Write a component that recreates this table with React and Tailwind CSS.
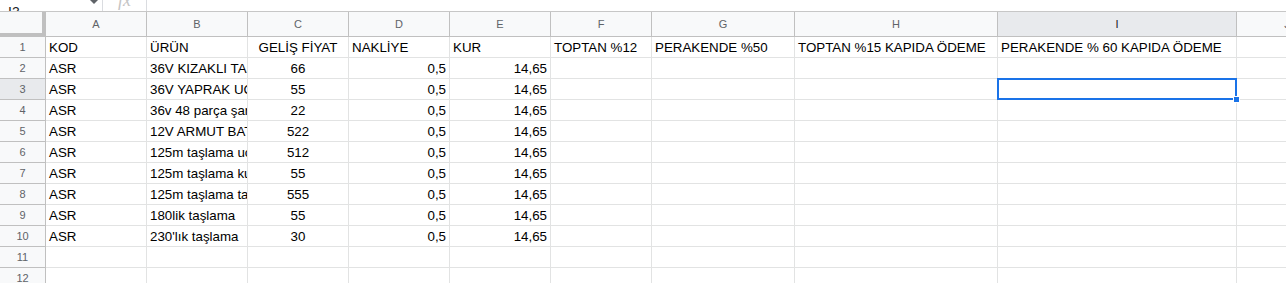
import React from 'react'

const cols = [
  { key: 'A', w: 'w-[101px]' },
  { key: 'B', w: 'w-[101px]' },
  { key: 'C', w: 'w-[101px]' },
  { key: 'D', w: 'w-[101px]' },
  { key: 'E', w: 'w-[101px]' },
  { key: 'F', w: 'w-[101px]' },
  { key: 'G', w: 'w-[143px]' },
  { key: 'H', w: 'w-[203px]' },
  { key: 'I', w: 'w-[239px]' },
  { key: 'J', w: 'w-[101px]' },
]

const align = { C: 'justify-center', D: 'justify-end', E: 'justify-end' }

const header = ['KOD', 'ÜRÜN', 'GELİŞ FİYAT', 'NAKLİYE', 'KUR', 'TOPTAN %12', 'PERAKENDE %50', 'TOPTAN %15 KAPIDA ÖDEME', 'PERAKENDE % 60 KAPIDA ÖDEME', '']

const products = [
  ['36V KIZAKLI TAŞLAMA', '66'],
  ['36V YAPRAK UÇ SETİ', '55'],
  ['36v 48 parça şarjlı set', '22'],
  ['12V ARMUT BATARYA', '522'],
  ['125m taşlama ucu', '512'],
  ['125m taşlama kulbu', '55'],
  ['125m taşlama taşı', '555'],
  ['180lik taşlama', '55'],
  ["230'lık taşlama", '30'],
]

const rows = [
  header,
  ...products.map(([name, price]) => ['ASR', name, price, '0,5', '14,65', '', '', '', '', '']),
  Array(10).fill(''),
  Array(10).fill(''),
]

export default function App() {
  return (
    <div className="w-[1286px] h-[283px] overflow-hidden bg-white text-black" style={{ fontFamily: '"Liberation Sans", Arial, sans-serif' }}>
      {/* formula bar, cut off at the top */}
      <div className="h-[12px] overflow-hidden flex border-b border-[#c7c7c7]">
        <div className="w-[103px] flex items-end border-r border-[#dadce0] relative">
          <span className="ml-[8px] -mb-[8px] text-[14px] text-[#202124] leading-none">I3</span>
          <span className="absolute left-[90px] top-0 w-0 h-0 border-l-[4px] border-r-[4px] border-t-[4px] border-l-transparent border-r-transparent border-t-[#5f6368]" />
        </div>
        <div className="w-[44px] border-r border-[#dadce0] flex items-start justify-center">
          <span className="-mt-[9px] text-[18px] italic text-[#c4c4c4] leading-none" style={{ fontFamily: '"Liberation Serif", serif' }}>fx</span>
        </div>
        <div className="flex-1" />
      </div>

      {/* column headers */}
      <div className="flex h-[25px] bg-[#f8f9fa]">
        <div className="w-[46px] shrink-0 border-r-[4px] border-b-[4px] border-[#c0c0c0]" />
        {cols.map((c) => (
          <div
            key={c.key}
            className={`${c.w} shrink-0 flex items-center justify-center pt-[1px] border-r border-b border-[#c0c0c0] text-[11px] ${c.key === 'I' ? 'bg-[#e8eaed] text-[#202124]' : 'text-[#5f6368]'}`}
          >
            {c.key}
          </div>
        ))}
      </div>

      {/* rows */}
      <div className="relative">
        {rows.map((r, i) => (
          <div key={i} className="flex h-[21px]">
            <div className={`w-[46px] shrink-0 flex items-center justify-center pt-[1px] border-r border-b border-[#c0c0c0] text-[11px] text-[#5f6368] ${i === 2 ? 'bg-[#e8eaed]' : 'bg-[#f8f9fa]'}`}>
              {i + 1}
            </div>
            {cols.map((c, j) => (
              <div
                key={c.key}
                className={`${c.w} shrink-0 flex items-center overflow-hidden whitespace-nowrap px-[3px] pt-[1px] border-r border-b border-[#e2e3e3] text-[13.33px] ${i === 0 ? (c.key === 'C' ? 'justify-center' : 'justify-start') : align[c.key] || 'justify-start'}`}
              >
                {r[j]}
              </div>
            ))}
          </div>
        ))}
        {/* selected cell I3 */}
        <div className="absolute left-[997px] top-[41px] w-[240px] h-[22px] border-2 border-[#1a73e8] pointer-events-none" />
        <div className="absolute left-[1233px] top-[59px] w-[7px] h-[7px] bg-[#1a73e8] border border-white" />
      </div>
    </div>
  )
}
